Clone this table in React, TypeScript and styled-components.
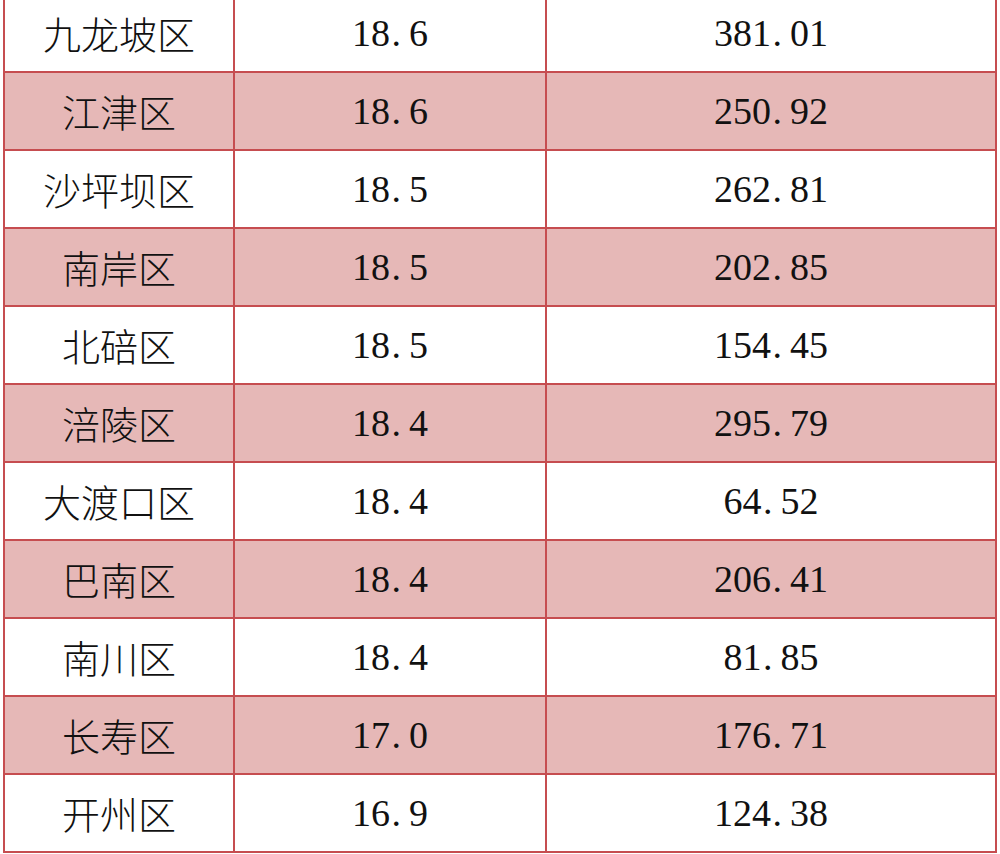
import React from 'react';
import styled, { createGlobalStyle } from 'styled-components';

const GlobalStyle = createGlobalStyle`
  html, body {
    margin: 0;
    padding: 0;
    background: #ffffff;
  }
  body {
    width: 1000px;
    height: 854px;
    overflow: hidden;
  }
`;

const Page = styled.div`
  padding-left: 3px;
  margin-top: -7px;
`;

const Table = styled.table`
  width: 994px;
  border-collapse: collapse;
  table-layout: fixed;
  color: #111111;
`;

const Row = styled.tr<{ $shaded: boolean }>`
  height: 78px;
  background-color: ${props => (props.$shaded ? '#e6b8b7' : '#ffffff')};
`;

const Cell = styled.td`
  border: 2px solid #c64d50;
  padding: 0;
  text-align: center;
  vertical-align: middle;
  font-size: 38px;
  line-height: 1;
`;

const NameCell = styled(Cell)`
  font-family: "Noto Sans CJK SC", "Liberation Serif", serif;
  font-weight: 300;
`;

const NumberCell = styled(Cell)`
  font-family: "Liberation Serif", "Noto Sans CJK SC", serif;
`;

const Dot = styled.span`
  display: inline-block;
  width: 0.5em;
  text-align: left;
  padding-left: 0.04em;
  box-sizing: border-box;
`;

const rows = [
  { name: '九龙坡区', rate: '18.6', value: '381.01' },
  { name: '江津区', rate: '18.6', value: '250.92' },
  { name: '沙坪坝区', rate: '18.5', value: '262.81' },
  { name: '南岸区', rate: '18.5', value: '202.85' },
  { name: '北碚区', rate: '18.5', value: '154.45' },
  { name: '涪陵区', rate: '18.4', value: '295.79' },
  { name: '大渡口区', rate: '18.4', value: '64.52' },
  { name: '巴南区', rate: '18.4', value: '206.41' },
  { name: '南川区', rate: '18.4', value: '81.85' },
  { name: '长寿区', rate: '17.0', value: '176.71' },
  { name: '开州区', rate: '16.9', value: '124.38' },
];

const Num = ({ text }: { text: string }) => {
  const [whole, frac] = text.split('.');
  return (
    <>
      {whole}
      <Dot>.</Dot>
      {frac}
    </>
  );
};

export default function App() {
  return (
    <>
      <GlobalStyle />
      <Page>
        <Table>
          <colgroup>
            <col style={{ width: 230 }} />
            <col style={{ width: 312 }} />
            <col />
          </colgroup>
          <tbody>
            {rows.map((r, i) => (
              <Row key={r.name} $shaded={i % 2 === 1}>
                <NameCell>{r.name}</NameCell>
                <NumberCell>
                  <Num text={r.rate} />
                </NumberCell>
                <NumberCell>
                  <Num text={r.value} />
                </NumberCell>
              </Row>
            ))}
          </tbody>
        </Table>
      </Page>
    </>
  );
}
